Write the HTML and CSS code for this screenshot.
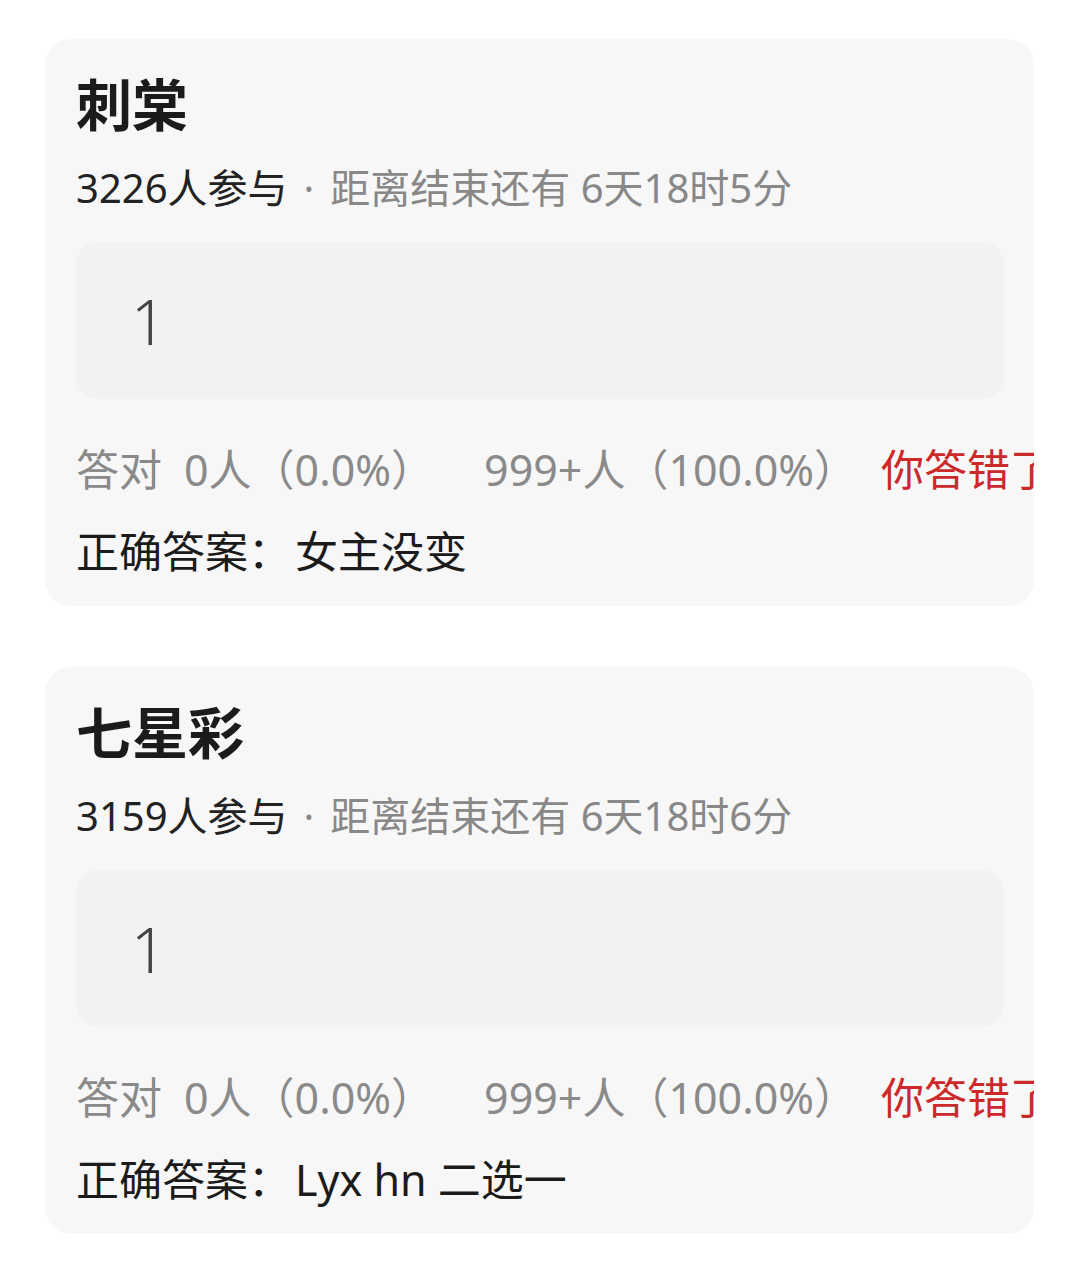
FILE: index.html
```html
<!DOCTYPE html>
<html lang="zh-CN">
<head>
<meta charset="utf-8">
<title>竞猜</title>
<link rel="stylesheet" href="styles.css">
</head>
<body>
<main class="list">
  <section class="card">
    <h2 class="title">刺棠</h2>
    <p class="meta"><span class="dark">3226人参与</span><span class="dot">·</span><span class="gray">距离结束还有 6天18时5分</span></p>
    <div class="option"><span class="option-text">1</span></div>
    <p class="stats"><span class="s-label">答对</span><span class="s-right">0人（0.0%）</span><span class="s-wrong">999+人（100.0%）</span><span class="s-result">你答错了</span></p>
    <p class="answer"><span class="a-label">正确答案：</span>女主没变</p>
  </section>
  <section class="card">
    <h2 class="title">七星彩</h2>
    <p class="meta"><span class="dark">3159人参与</span><span class="dot">·</span><span class="gray">距离结束还有 6天18时6分</span></p>
    <div class="option"><span class="option-text">1</span></div>
    <p class="stats"><span class="s-label">答对</span><span class="s-right">0人（0.0%）</span><span class="s-wrong">999+人（100.0%）</span><span class="s-result">你答错了</span></p>
    <p class="answer"><span class="a-label">正确答案：</span>Lyx hn 二选一</p>
  </section>
</main>
</body>
</html>
```

FILE: styles.css
```css
html, body {
  margin: 0;
  padding: 0;
  background: #ffffff;
}
body {
  width: 1080px;
  height: 1286px;
  overflow: hidden;
  font-family: "Noto Sans", "Noto Sans CJK SC", sans-serif;
}
.list {
  display: flex;
  flex-direction: column;
  gap: 61px;
  padding: 39px 0 0 45px;
}
.card {
  box-sizing: border-box;
  width: 989px;
  height: 567px;
  background: #f7f7f7;
  border-radius: 26px;
  padding: 27px 30px 0 31px;
  overflow: hidden;
}
.title {
  margin: 0;
  font-family: "Noto Sans CJK SC", sans-serif;
  font-size: 56px;
  line-height: 72px;
  font-weight: 700;
  color: #1b1b1b;
}
.meta {
  margin: 25px 0 0;
  font-size: 40px;
  line-height: 50px;
  white-space: nowrap;
}
.dark { color: #222222; }
.dot { color: #888888; margin: 0 16px 0 16px; }
.gray { color: #888888; }
.option {
  margin-top: 29px;
  height: 157px;
  box-sizing: border-box;
  background: #f2f2f2;
  border-radius: 22px;
  display: flex;
  align-items: center;
  padding-left: 55px;
}
.option-text {
  font-size: 62px;
  font-weight: 300;
  color: #444444;
  line-height: 1;
}
.stats {
  margin: 46px 0 0;
  font-size: 43px;
  line-height: 50px;
  color: #8a8a8a;
  white-space: nowrap;
  display: flex;
}
.s-right { margin-left: 22px; }
.s-wrong { margin-left: 50px; }
.s-result { margin-left: 24px; color: #cc2a2a; }
.answer {
  margin: 32px 0 0;
  font-size: 43px;
  line-height: 50px;
  color: #1b1b1b;
  white-space: nowrap;
}
.a-label { margin-right: 4px; }
```
